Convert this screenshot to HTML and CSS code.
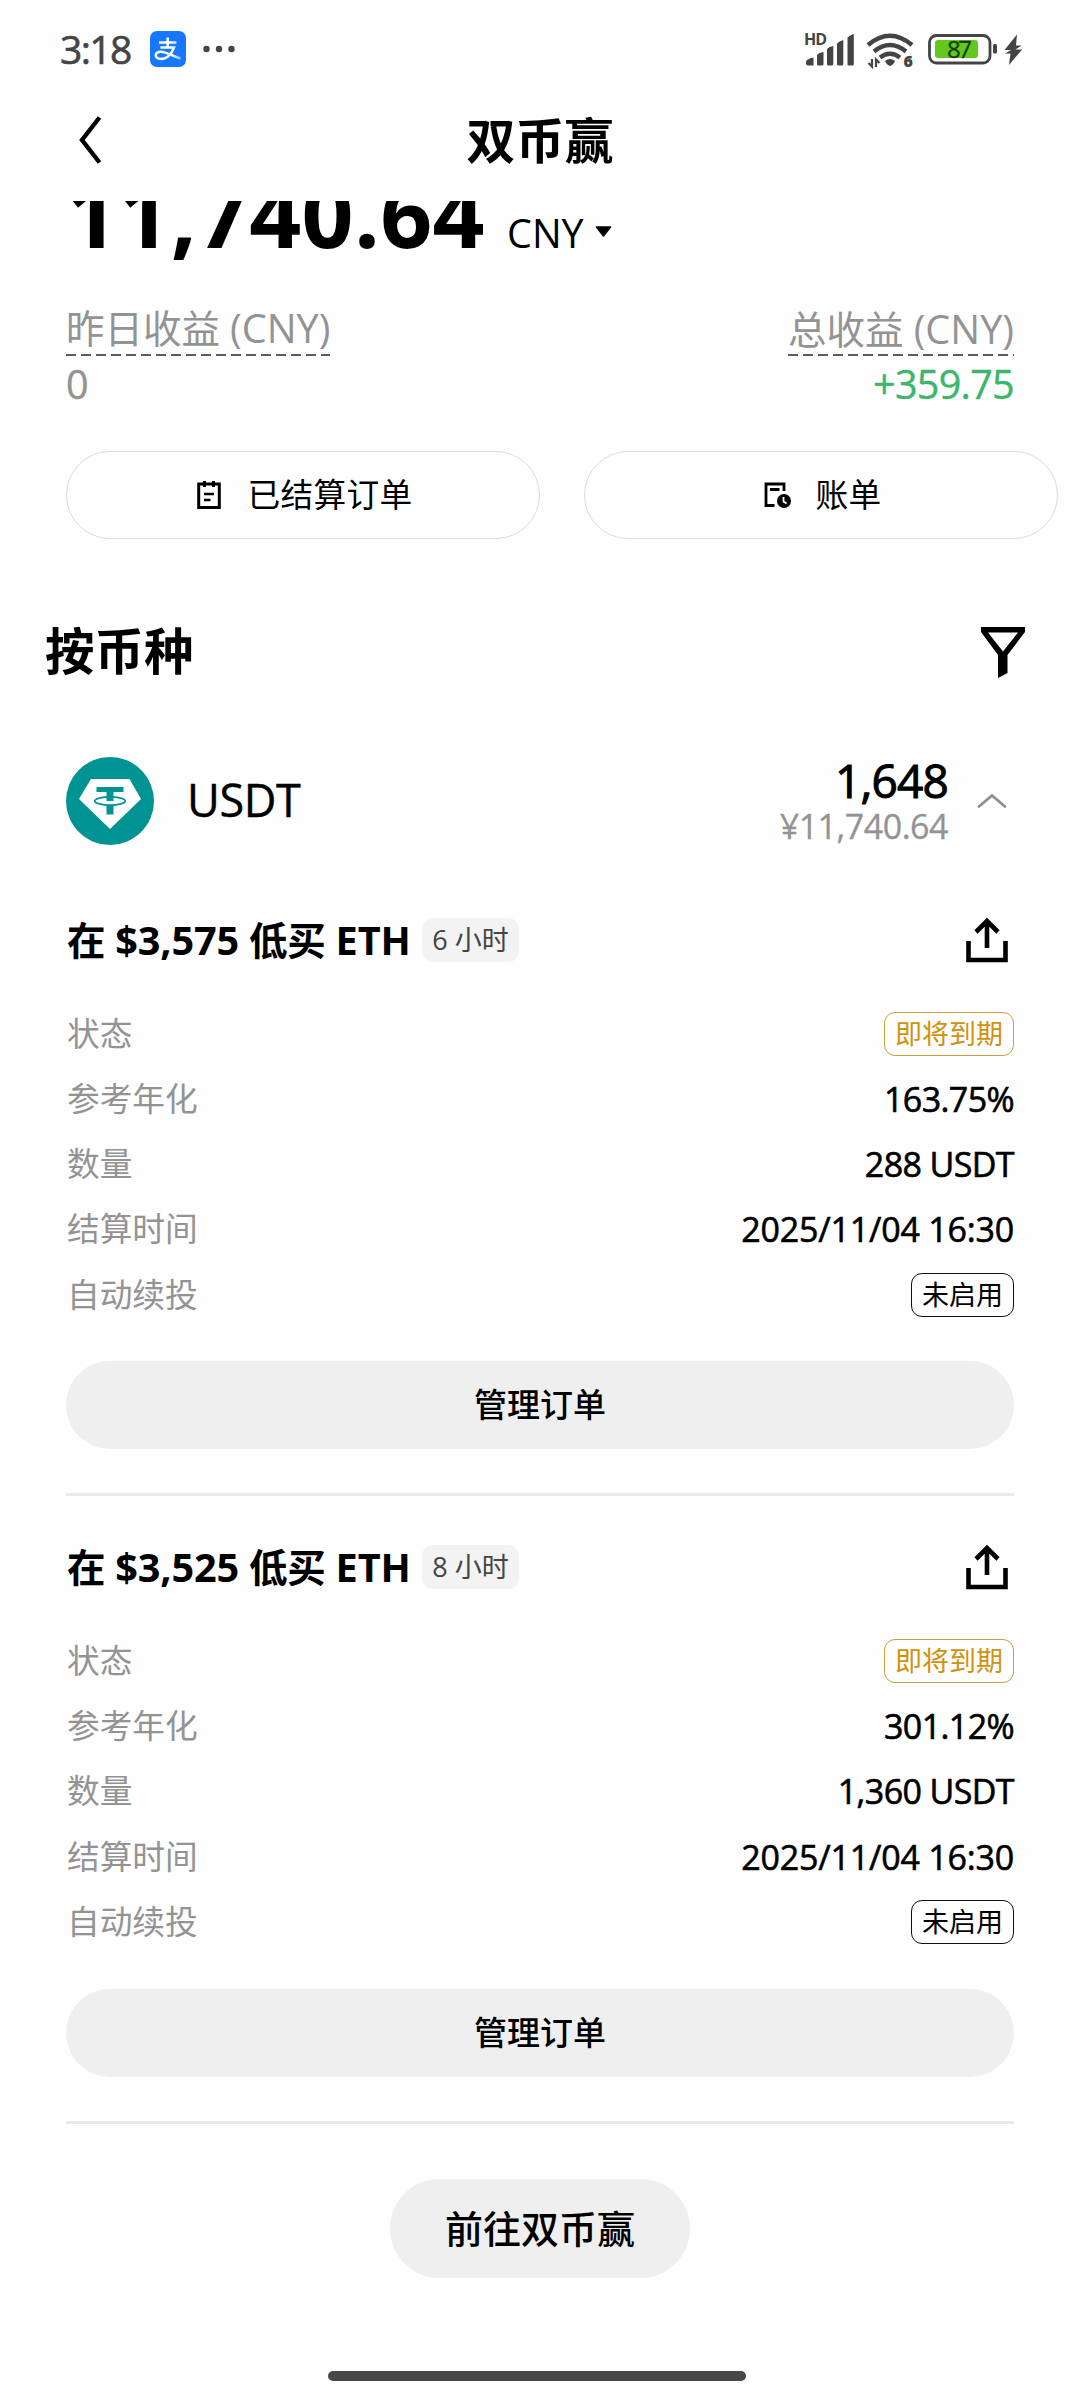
FILE: index.html
```html
<!DOCTYPE html>
<html lang="zh-CN">
<head>
<meta charset="utf-8">
<title>双币赢</title>
<link rel="stylesheet" href="styles.css">
</head>
<body>
<svg width="0" height="0" class="defs">
  <symbol id="share" viewBox="0 0 48 48">
    <path d="M5.5 25v19h37V25M24 32V5M13 16 24 5l11 11" fill="none" stroke="#000" stroke-width="4.6"/>
  </symbol>
</svg>

<div class="status">
  <span class="clock">3:18</span>
  <svg class="pay" width="36" height="36" viewBox="0 0 36 36">
    <defs><linearGradient id="tail" x1="0" x2="1"><stop offset=".65" stop-color="#fff"/><stop offset="1" stop-color="#fff" stop-opacity=".55"/></linearGradient></defs>
    <rect width="36" height="36" rx="7" fill="#1677ff"/>
    <path d="M9 11.500h17.500M17.700 6.500v10.500M10.500 16.500h13.500C22 22 17.500 28 11 28c-7 0-7-7.500 0-7.300 6 .3 11 4.300 19.500 6.800" fill="none" stroke="url(#tail)" stroke-width="2.500"/>
  </svg>
  <svg class="more" width="32" height="8" viewBox="0 0 32 8" fill="#444"><circle cx="3.500" cy="4" r="3.200"/><circle cx="16" cy="4" r="3.200"/><circle cx="28.500" cy="4" r="3.200"/></svg>
  <svg class="system" width="222" height="50" viewBox="802 24 222 50">
    <g fill="#444">
      <text x="804" y="45" class="hd" textLength="23">HD</text>
      <path d="M806 62q0-3 7.500-4.500V65.500H808q-2 0-2-2zM817 55q2-2.500 6.500-3v12q0 1.500-1.500 1.500h-3.500q-1.500 0-1.500-1.500zM827 49q2-2.500 6.300-3v18q0 1.500-1.500 1.500h-3.300q-1.500 0-1.500-1.500zM837 43.500q2-2.500 6.300-3.500v24q0 1.500-1.500 1.500h-3.300q-1.500 0-1.500-1.500zM847.500 37.500q2-2.500 6.300-3.500v30q0 1.500-1.500 1.500H849q-1.500 0-1.500-1.500z"/>
      <path d="M885 61q5-4 10 0-1.500 4-5 5-3.500-1-5-5z"/>
      <path d="M872 59v7.500l-3.500-3.500M876 67v-7.500l3.500 3.500" fill="none" stroke="#444" stroke-width="2.200"/>
      <text x="903.500" y="67" class="six">6</text>
      <rect x="993" y="44" width="4" height="9.500" rx="1.500"/>
      <path d="M1017 34.500 1004.500 50h6.500l-6 3.500h5.500L1009 65l13-15.500h-6.500l6-4h-5.500z"/>
    </g>
    <g fill="none" stroke="#444" stroke-width="4.500">
      <path d="M868 45q22-18.500 44 0M874 51.500q16-13 32 0M880 57.500q10-7.500 20 0"/>
      <rect x="929.500" y="35.500" width="60.500" height="27.500" rx="7" stroke-width="2.800"/>
    </g>
    <rect x="935" y="40" width="43" height="18" rx="3" fill="#63c81e"/>
    <text x="947" y="58" class="charge" textLength="25">87</text>
  </svg>
</div>

<header class="header">
  <svg class="back" width="24" height="50" viewBox="0 0 24 50"><path d="M20.500 2.500 3 25l17.500 22.500" fill="none" stroke="#000" stroke-width="4.400"/></svg>
  <h1>双币赢</h1>
</header>

<main>
  <section class="summary">
    <div class="amount">
      <span class="total">11,740.64</span>
      <span class="currency">CNY</span>
      <svg class="caret" width="17" height="11" viewBox="0 0 17 11"><path d="M1.500 1h14l-7 9z" stroke="#000" stroke-linejoin="round" stroke-width="1.500"/></svg>
    </div>
    <div class="earnings">
      <div class="earning"><span class="label">昨日收益 <span class="lat">(CNY)</span></span><span class="figure">0</span></div>
      <div class="earning right"><span class="label">总收益 <span class="lat">(CNY)</span></span><span class="figure up">+359.75</span></div>
    </div>
    <div class="links">
      <div class="outline">
        <svg width="24" height="30" viewBox="0 0 24 30"><path d="M1.700 4h20.600v23.500H1.700zM7.500 1v6M16.500 1v6" fill="none" stroke="#000" stroke-width="3"/><path d="M7 14h10M7 20h6.500" stroke="#000" stroke-width="2.500"/></svg>
        <span>已结算订单</span>
      </div>
      <div class="outline bill">
        <svg width="28" height="28" viewBox="0 0 28 28"><path d="M20 10V3H2v21.500h8.500M6 8.500h9.500" fill="none" stroke="#000" stroke-width="2.800"/><circle cx="20" cy="20" r="7" fill="#000"/><path d="M19.500 16v4.500l3 2" fill="none" stroke="#fff" stroke-width="1.800"/></svg>
        <span>账单</span>
      </div>
    </div>
  </section>

  <div class="heading">
    <h2>按币种</h2>
    <svg width="44" height="52" viewBox="0 0 44 52"><path fill-rule="evenodd" d="M0 1h44v5L26.500 29v18L17 52V29L0 6zM7 6.500 22 25.500 37 6.500z"/></svg>
  </div>

  <div class="coin">
    <svg width="88" height="88" viewBox="66 757 88 88">
      <circle cx="110" cy="801" r="44" fill="#009393"/>
      <path d="M91 779h38.500L141 799l-31 30-31-30z" fill="#fff"/>
      <path d="M96.500 787h27v5h-10v9h-7v-9h-10zM106.500 805h7v9.500h-7z" fill="#009393"/>
      <ellipse cx="110" cy="801" rx="15.200" ry="4.200" fill="none" stroke="#009393" stroke-width="1.800"/>
    </svg>
    <span class="coin-name">USDT</span>
    <div class="holding"><span class="qty">1,648</span><span class="fiat">¥11,740.64</span></div>
    <svg class="chev" width="30" height="16" viewBox="0 0 30 16"><path d="M2 13.500 15 2.500l13 11" fill="none" stroke="#909090" stroke-width="2.800" stroke-linecap="round"/></svg>
  </div>

  <article class="order">
    <div class="order-head">
      <h3>在 <span class="lat">$3,575</span> 低买 <span class="lat">ETH</span></h3><span class="tag">6 小时</span>
      <svg width="48" height="48"><use href="#share"/></svg>
    </div>
    <dl>
      <div class="row"><dt>状态</dt><dd class="badge due">即将到期</dd></div>
      <div class="row"><dt>参考年化</dt><dd>163.75%</dd></div>
      <div class="row"><dt>数量</dt><dd>288 USDT</dd></div>
      <div class="row"><dt>结算时间</dt><dd class="time">2025/11/04 16:30</dd></div>
      <div class="row"><dt>自动续投</dt><dd class="badge">未启用</dd></div>
    </dl>
    <div class="manage">管理订单</div>
  </article>

  <article class="order">
    <div class="order-head">
      <h3>在 <span class="lat">$3,525</span> 低买 <span class="lat">ETH</span></h3><span class="tag">8 小时</span>
      <svg width="48" height="48"><use href="#share"/></svg>
    </div>
    <dl>
      <div class="row"><dt>状态</dt><dd class="badge due">即将到期</dd></div>
      <div class="row"><dt>参考年化</dt><dd>301.12%</dd></div>
      <div class="row"><dt>数量</dt><dd>1,360 USDT</dd></div>
      <div class="row"><dt>结算时间</dt><dd class="time">2025/11/04 16:30</dd></div>
      <div class="row"><dt>自动续投</dt><dd class="badge">未启用</dd></div>
    </dl>
    <div class="manage">管理订单</div>
  </article>

  <div class="goto">前往双币赢</div>
  <div class="home-bar"></div>
</main>
</body>
</html>
```
FILE: styles.css
```css
* { box-sizing: border-box; }

body {
  margin: 0;
  width: 1080px;
  height: 2400px;
  overflow: hidden;
  background: #fefefe;
  color: #000;
  font-family: "Open Sans", "Noto Sans CJK SC", sans-serif;
}

h1, h2, h3, dl, dd { margin: 0; }
svg { display: block; flex: none; }
.defs { position: absolute; }
.lat { font-size: 1.03em; }

.status {
  display: flex;
  align-items: center;
  height: 98px;
  padding: 0 56px 0 60px;
}
.clock {
  width: 90px;
  font-size: 39px;
  letter-spacing: -1.6px;
  line-height: 98px;
  color: #444;
  -webkit-text-stroke: 0.6px #444;
}
.more { margin-left: 17px; }
.system { margin-left: auto; overflow: visible; }
.hd { font-size: 16px; font-weight: 700; }
.six { font-size: 16px; font-weight: 800; }
.charge { font-size: 24px; fill: #123c08; stroke: #123c08; stroke-width: 0.3px; }

.header {
  display: grid;
  grid-template-columns: 200px 1fr 200px;
  align-items: center;
  height: 103px;
  padding-bottom: 19px;
}
.back { margin-left: 79px; }
h1 { font-size: 49px; line-height: 84px; text-align: center; font-weight: 700; }

main { overflow: hidden; height: 2199px; }

.summary { padding: 0 0 0 66px; }
.amount {
  display: flex;
  align-items: baseline;
  height: 90px;
  margin-top: -33px;
}
.total {
  width: 441px;
  font-size: 91px;
  font-weight: 700;
  letter-spacing: 0.3px;
  line-height: 90px;
}
.currency { font-size: 39.5px; line-height: 60px; width: 88px; }
.caret { align-self: flex-end; margin-bottom: 21px; }

.earnings {
  display: flex;
  justify-content: space-between;
  padding: 42px 66px 0 0;
}
.earning { display: flex; flex-direction: column; }
.right { align-items: flex-end; }
.label {
  height: 56px;
  font-size: 38.5px;
  line-height: 56px;
  color: #939393;
  background: repeating-linear-gradient(90deg, #5c5c5c 0 10px, transparent 10px 15px) left bottom / 100% 2px no-repeat;
}
.right .label { line-height: 58px; }
.figure { font-size: 39.5px; line-height: 56px; height: 54px; color: #939393; -webkit-text-stroke: 0.4px; }
.up { color: #3cb56d; letter-spacing: -0.7px; }

.links { display: flex; gap: 44px; margin-top: 41px; }
.outline {
  display: flex;
  align-items: center;
  justify-content: center;
  gap: 27px;
  width: 474px;
  height: 88px;
  border: 1px solid #dcdcdc;
  border-radius: 44px;
  font-size: 32.7px;
  line-height: 44px;
}
.outline span { letter-spacing: 0.3px; }
.outline svg { margin-left: 3px; }
.bill { gap: 24px; }

.heading {
  display: flex;
  align-items: center;
  justify-content: space-between;
  height: 60px;
  margin-top: 83px;
  padding: 0 55px 0 45px;
}
h2 { font-size: 49.5px; line-height: 58px; font-weight: 700; padding-bottom: 2px; }

.coin {
  display: flex;
  align-items: center;
  height: 88px;
  margin-top: 75px;
  padding: 0 73px 0 66px;
}
.coin-name { margin-left: 33px; padding-bottom: 2px; font-size: 45px; line-height: 60px; letter-spacing: -0.4px; -webkit-text-stroke: 0.4px; }
.holding {
  display: flex;
  flex-direction: column;
  align-items: flex-end;
  margin-left: auto;
  padding-top: 2px;
}
.qty { font-size: 46px; line-height: 48px; letter-spacing: -0.8px; -webkit-text-stroke: 1px; }
.fiat { font-size: 34px; line-height: 44px; letter-spacing: -0.5px; color: #939393; -webkit-text-stroke: 0.3px; }
.chev { margin-left: 29px; }

.order { padding: 71px 66px 0; }
.order + .order { padding-top: 47px; }
.order-head { display: flex; align-items: center; height: 48px; padding-right: 3px; }
.order-head svg { margin-left: auto; }
h3 { font-size: 38.5px; line-height: 48px; font-weight: 700; white-space: pre; padding-left: 1px; letter-spacing: -0.13px; }
.tag {
  height: 44px;
  margin-left: 11px;
  padding: 0 10.5px;
  border-radius: 11px;
  background: #f3f3f3;
  font-size: 27px;
  line-height: 44px;
  color: #444;
}
dl { margin-top: 37px; }
.row {
  display: flex;
  align-items: center;
  justify-content: space-between;
  height: 65.25px;
}
dt { padding-left: 1px; font-size: 32.7px; color: #939393; line-height: 44px; }
dd { font-size: 34px; line-height: 44px; letter-spacing: -0.6px; -webkit-text-stroke: 0.6px; }
.time { letter-spacing: -0.2px; }
.badge {
  height: 44px;
  padding: 0 10px;
  border: 1.5px solid #111;
  border-radius: 11px;
  font-size: 27px;
  line-height: 42px;
  letter-spacing: 0;
  -webkit-text-stroke: 0;
}
.due { color: #d0920e; border-color: #c9a03a; }
.manage {
  height: 88px;
  margin-top: 34px;
  border-radius: 44px;
  background: #efefef;
  font-size: 33px;
  font-weight: 500;
  line-height: 88px;
  text-align: center;
}
.order::after {
  content: "";
  display: block;
  height: 3px;
  margin-top: 44px;
  background: #e9e9e9;
}

.goto {
  width: 300px;
  height: 99px;
  margin: 55px auto 0;
  border-radius: 50px;
  background: #efefef;
  font-size: 38px;
  font-weight: 500;
  line-height: 99px;
  text-align: center;
}
.home-bar {
  width: 418px;
  height: 10px;
  margin: 93px 0 0 328px;
  border-radius: 5px;
  background: #484848;
}
```
